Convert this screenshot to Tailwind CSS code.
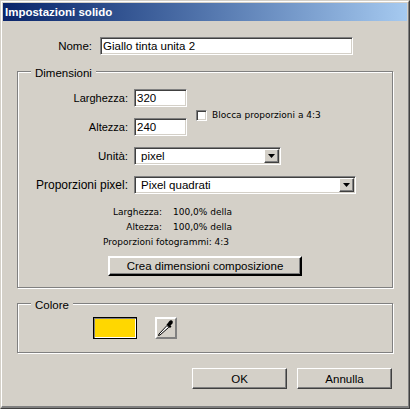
<!doctype html>
<html><head><meta charset="utf-8"><script src="https://cdn.jsdelivr.net/npm/@tailwindcss/browser@4"></script></head>
<body class="m-0 bg-[#d4d0c8]">
<div class="w-[410px] h-[409px] overflow-hidden flex flex-col bg-[#d4d0c8] border-t border-t-[#d4d0c8] border-l border-l-[#d4d0c8] border-r border-r-[#404040] border-b border-b-[#404040] font-['Liberation_Sans',sans-serif] text-[11.5px] leading-[14px] text-black">
  <div class="flex-1 flex flex-col border-t border-l border-white border-r border-r-[#808080] border-b-2 border-b-[#808080] pt-px pl-px pr-px">
    <div class="h-[18px] shrink-0 flex items-center pl-[2px] text-white font-bold text-[11.5px] bg-gradient-to-r from-[#0a246a] to-[#a6caf0]">Impostazioni solido</div>
    <div class="flex items-center mt-4 h-[18px]">
      <span class="w-[89px] text-right">Nome:</span>
      <div class="ml-[8px] w-[253px] h-[18px] bg-white border border-t-[#808080] border-l-[#808080] border-r-white border-b-white shadow-[inset_1px_1px_0_#404040,inset_-1px_-1px_0_#d4d0c8] flex items-center pl-[2px]">Giallo tinta unita 2</div>
    </div>

    <div class="relative mt-[16px] ml-[14px] w-[376px] h-[217px] border border-[#808080] shadow-[1px_1px_0_#ffffff,inset_1px_1px_0_#ffffff] flex flex-col">
      <span class="absolute left-[13px] top-[-6px] px-[4px] bg-[#d4d0c8]">Dimensioni</span>
      <div class="flex mt-[17px]">
        <div class="flex flex-col gap-[11px]">
          <div class="flex items-center h-[18px]"><span class="w-[110px] text-right text-[11px]">Larghezza:</span><div class="ml-[6px] w-[53px] h-[18px] bg-white border border-t-[#808080] border-l-[#808080] border-r-white border-b-white shadow-[inset_1px_1px_0_#404040,inset_-1px_-1px_0_#d4d0c8] flex items-center pl-[2px]">320</div></div>
          <div class="flex items-center h-[18px]"><span class="w-[110px] text-right text-[11px]">Altezza:</span><div class="ml-[6px] w-[53px] h-[18px] bg-white border border-t-[#808080] border-l-[#808080] border-r-white border-b-white shadow-[inset_1px_1px_0_#404040,inset_-1px_-1px_0_#d4d0c8] flex items-center pl-[2px]">240</div></div>
        </div>
        <div class="flex items-center ml-[9px] h-[47px] pt-[5px]">
          <div class="w-[11px] h-[11px] bg-white border border-t-[#808080] border-l-[#808080] border-r-white border-b-white shadow-[inset_1px_1px_0_#404040,inset_-1px_-1px_0_#d4d0c8]"></div>
          <span class="ml-[5px] text-[9px] font-['DejaVu_Sans',sans-serif]">Blocca proporzioni a 4:3</span>
        </div>
      </div>
      <div class="flex items-center h-[18px] mt-[11px]"><span class="w-[110px] text-right">Unità:</span>
        <div class="ml-[6px] w-[147px] h-[18px] bg-white border border-t-[#808080] border-l-[#808080] border-r-white border-b-white shadow-[inset_1px_1px_0_#404040,inset_-1px_-1px_0_#d4d0c8] flex items-center justify-between pl-[6px] pr-px"><span>pixel</span>
          <div class="w-[15px] h-[14px] bg-[#d4d0c8] border border-t-white border-l-white border-r-[#404040] border-b-[#404040] shadow-[inset_-1px_-1px_0_#808080] flex items-center justify-center"><svg width="7" height="4" viewBox="0 0 7 4"><path d="M0 0h7L3.5 4z" fill="#000"/></svg></div></div></div>
      <div class="flex items-center h-[18px] mt-[11px]"><span class="w-[110px] text-right text-[12px]">Proporzioni pixel:</span>
        <div class="ml-[6px] w-[222px] h-[18px] bg-white border border-t-[#808080] border-l-[#808080] border-r-white border-b-white shadow-[inset_1px_1px_0_#404040,inset_-1px_-1px_0_#d4d0c8] flex items-center justify-between pl-[6px] pr-px"><span>Pixel quadrati</span>
          <div class="w-[15px] h-[14px] bg-[#d4d0c8] border border-t-white border-l-white border-r-[#404040] border-b-[#404040] shadow-[inset_-1px_-1px_0_#808080] flex items-center justify-center"><svg width="7" height="4" viewBox="0 0 7 4"><path d="M0 0h7L3.5 4z" fill="#000"/></svg></div></div></div>
      <div class="mt-[11px] flex flex-col gap-[1px] text-[9px] font-['DejaVu_Sans',sans-serif]">
        <div class="flex"><span class="w-[144px] text-right">Larghezza:</span><span class="ml-[11px]">100,0% della</span></div>
        <div class="flex"><span class="w-[144px] text-right">Altezza:</span><span class="ml-[11px]">100,0% della</span></div>
        <div class="flex"><span class="ml-[85px] whitespace-nowrap">Proporzioni fotogrammi: 4:3</span></div>
      </div>
      <div class="ml-[90px] mt-[7px] w-[194px] h-[20px] bg-[#d4d0c8] border-2 border-t-white border-l-white border-r-black border-b-black shadow-[inset_-1px_-1px_0_#808080] flex items-center justify-center">Crea dimensioni composizione</div>
    </div>

    <div class="relative mt-[15px] ml-[14px] w-[376px] h-[50px] border border-[#808080] shadow-[1px_1px_0_#ffffff,inset_1px_1px_0_#ffffff] flex items-center">
      <span class="absolute left-[13px] top-[-6px] px-[4px] bg-[#d4d0c8]">Colore</span>
      <div class="ml-[75px] w-[44px] h-[22px] bg-[#ffd700] border border-black shadow-[inset_1px_1px_0_#808080,inset_-1px_-1px_0_#ffffff]"></div>
      <div class="ml-[18px] w-[22px] h-[22px] bg-[#d4d0c8] border-2 border-t-white border-l-white border-r-[#808080] border-b-[#808080] flex items-center justify-center">
        <svg width="18" height="18" viewBox="0 0 18 18"><path d="M3 16 L1.5 16.5 L2 15 L10 6.5 L11.8 8.3 Z" fill="#fff" stroke="#000" stroke-width="1"/><path d="M9.5 5.5 L13 9 L14.5 7.5 L13.5 6.5 L15.5 4.5 Q16.5 2.5 15 1.5 Q13.5 0.5 12 2.5 L10.8 4.2 Z" fill="#000"/></svg>
      </div>
    </div>

    <div class="flex justify-end gap-[10px] mt-[15px] mr-[15px]">
      <div class="w-[95px] h-[21px] bg-[#d4d0c8] border border-t-white border-l-white border-r-[#404040] border-b-[#404040] shadow-[inset_-1px_-1px_0_#808080] flex items-center justify-center">OK</div>
      <div class="w-[95px] h-[21px] bg-[#d4d0c8] border border-t-white border-l-white border-r-[#404040] border-b-[#404040] shadow-[inset_-1px_-1px_0_#808080] flex items-center justify-center">Annulla</div>
    </div>
  </div>
</div>
</body></html>
